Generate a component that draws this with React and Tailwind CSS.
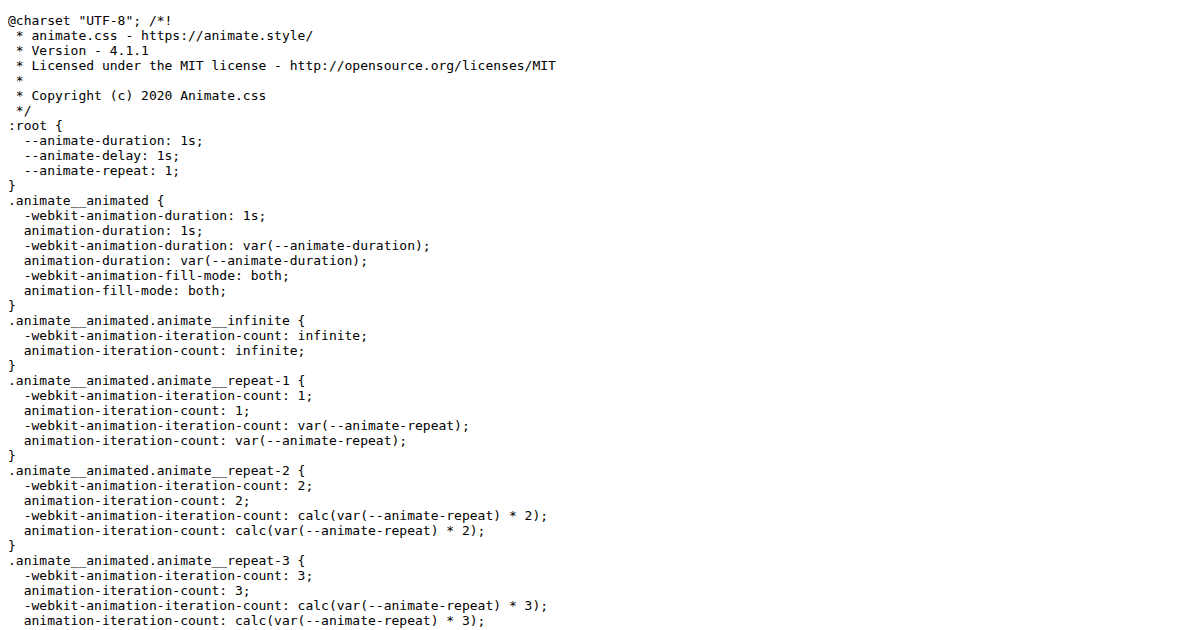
const text = `@charset "UTF-8"; /*!
 * animate.css - https://animate.style/
 * Version - 4.1.1
 * Licensed under the MIT license - http://opensource.org/licenses/MIT
 *
 * Copyright (c) 2020 Animate.css
 */
:root {
  --animate-duration: 1s;
  --animate-delay: 1s;
  --animate-repeat: 1;
}
.animate__animated {
  -webkit-animation-duration: 1s;
  animation-duration: 1s;
  -webkit-animation-duration: var(--animate-duration);
  animation-duration: var(--animate-duration);
  -webkit-animation-fill-mode: both;
  animation-fill-mode: both;
}
.animate__animated.animate__infinite {
  -webkit-animation-iteration-count: infinite;
  animation-iteration-count: infinite;
}
.animate__animated.animate__repeat-1 {
  -webkit-animation-iteration-count: 1;
  animation-iteration-count: 1;
  -webkit-animation-iteration-count: var(--animate-repeat);
  animation-iteration-count: var(--animate-repeat);
}
.animate__animated.animate__repeat-2 {
  -webkit-animation-iteration-count: 2;
  animation-iteration-count: 2;
  -webkit-animation-iteration-count: calc(var(--animate-repeat) * 2);
  animation-iteration-count: calc(var(--animate-repeat) * 2);
}
.animate__animated.animate__repeat-3 {
  -webkit-animation-iteration-count: 3;
  animation-iteration-count: 3;
  -webkit-animation-iteration-count: calc(var(--animate-repeat) * 3);
  animation-iteration-count: calc(var(--animate-repeat) * 3);
}
.animate__animated.animate__delay-1s {
  -webkit-animation-delay: 1s;
  animation-delay: 1s;
}`;

export default function App() {
  return (
    <div className="w-[1200px] h-[630px] overflow-hidden bg-white px-[8px] pt-[13px]">
      <pre className="m-0 whitespace-pre text-[13px] leading-[15px] text-black font-['DejaVu_Sans_Mono',monospace]">
        {text}
      </pre>
    </div>
  );
}
